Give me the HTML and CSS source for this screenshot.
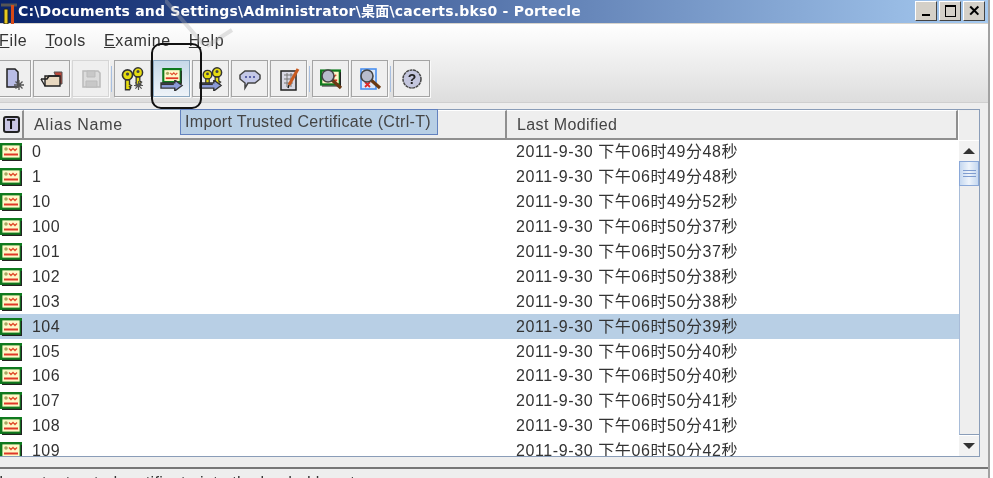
FILE: index.html
```html
<!DOCTYPE html>
<html lang="en">
<head>
    <meta charset="UTF-8">
    <meta name="viewport" content="width=device-width, initial-scale=1.0">
    <title>Portecle</title>
    <link rel="stylesheet" href="styles.css">
</head>
<body>
    <svg class="icon-defs" width="0" height="0">
        <defs>
            <symbol id="i-star" viewBox="0 0 10 10">
                <path d="M5 0v10M0 5h10M1.500 1.500l7 7M8.500 1.500l-7 7" stroke="#555" stroke-width="1.300" fill="none"/>
            </symbol>
            <symbol id="i-key" viewBox="0 0 14 24">
                <circle cx="7" cy="6.500" r="5.500" fill="#e6dc10" stroke="#333" stroke-width="1.800"/>
                <circle cx="7" cy="5.500" r="1.800" fill="#444"/>
                <path d="M4.800 12h4.400v5l2 1-2 1.500 1.300 1-1.300 2.200H4.800z" fill="#e6dc10" stroke="#333" stroke-width="1.500"/>
            </symbol>
            <symbol id="i-arrow" viewBox="0 0 24 12">
                <path d="M0 3.200h15V0l8 6-8 6V8.800H0z" fill="#8c9cd8" stroke="#333" stroke-width="1.500"/>
                <path d="M0 4.500h14" stroke="#333" stroke-width="2"/>
            </symbol>
            <symbol id="i-cert" viewBox="0 0 22 18">
                <rect x="1.200" y="1.200" width="19.600" height="14.600" fill="#fff9c8" stroke="#0f7a1e" stroke-width="2.400"/>
                <path d="M2 17.400h20M21.400 3v14" stroke="#222" stroke-width="1.200"/>
                <circle cx="6" cy="6" r="1.800" fill="#a8a860"/>
                <path d="M9 5.500l2 2 2-2 2 2 2-2" stroke="#e05030" stroke-width="1.400" fill="none"/>
                <path d="M4 11.500h14" stroke="#e03828" stroke-width="2"/>
            </symbol>
            <symbol id="i-lens" viewBox="0 0 24 24">
                <path d="M13 13l9 8" stroke="#6b3a14" stroke-width="3.200"/>
                <circle cx="9" cy="9" r="6" fill="#b8bccc" stroke="#444" stroke-width="1.600"/>
            </symbol>
        </defs>
    </svg>

    <div class="window">
        <div class="titlebar">
            <svg class="app-icon" viewBox="0 0 18 24" width="18" height="24">
                <path d="M1 5h16" stroke="#555" stroke-width="3"/>
                <path d="M11 5h3v19h-3z" fill="#d84a18"/>
                <path d="M4 9h4v15H4z" fill="#e6c820" stroke="#222"/>
            </svg>
            <span class="title-text">C:\Documents and Settings\Administrator\桌面\cacerts.bks0 - Portecle</span>
            <div class="window-buttons">
                <div class="win-btn"><span class="glyph-min"></span></div>
                <div class="win-btn"><span class="glyph-max"></span></div>
                <div class="win-btn win-close">✕</div>
            </div>
        </div>

        <div class="chrome">
            <div class="menubar">
                <span class="menu menu-file"><u>F</u>ile</span>
                <span class="menu"><u>T</u>ools</span>
                <span class="menu"><u>E</u>xamine</span>
                <span class="menu"><u>H</u>elp</span>
            </div>
            <div class="toolbar">
                <div class="tool">
                    <svg viewBox="0 0 24 24" width="24" height="24">
                        <path d="M6 2h8l3 3v15H6z" fill="#b9bde6" stroke="#222" stroke-width="1.500"/>
                        <use href="#i-star" x="13" y="13" width="10" height="10"/>
                    </svg>
                </div>
                <div class="tool">
                    <svg viewBox="0 0 24 24" width="24" height="24">
                        <path d="M14 5h8v12h-3z" fill="#b8463a" stroke="#555"/>
                        <path d="M5 9h15v10H5z" fill="#e8d8c0" stroke="#222" stroke-width="1.400"/>
                        <path d="M1 12h6l2-3h10" fill="none" stroke="#222" stroke-width="1.600"/>
                        <path d="M1 12l4 7" stroke="#222" stroke-width="1.400"/>
                    </svg>
                </div>
                <div class="tool tool-off">
                    <svg viewBox="0 0 24 24" width="24" height="24">
                        <path d="M4 4h15l2 2v14H4z" fill="#dcdcdc" stroke="#bbb" stroke-width="1.500"/>
                        <path d="M8 4h8v6H8zM7 14h11v6H7z" fill="#c8c8c8" stroke="#bbb"/>
                    </svg>
                </div>
                <div class="tool-sep"></div>
                <div class="tool">
                    <svg viewBox="0 0 24 24" width="24" height="24">
                        <use href="#i-key" x="0" y="2" width="13" height="22"/>
                        <use href="#i-key" x="11" y="0" width="12" height="20"/>
                        <use href="#i-star" x="13" y="14" width="9" height="9"/>
                    </svg>
                </div>
                <div class="tool tool-hot">
                    <svg viewBox="0 0 24 24" width="24" height="24">
                        <use href="#i-cert" x="2" y="1" width="20" height="16"/>
                        <use href="#i-arrow" x="0" y="13" width="24" height="11"/>
                    </svg>
                </div>
                <div class="tool">
                    <svg viewBox="0 0 24 24" width="24" height="24">
                        <use href="#i-key" x="3" y="2" width="11" height="20"/>
                        <use href="#i-key" x="12" y="0" width="12" height="20"/>
                        <use href="#i-arrow" x="0" y="13" width="24" height="11"/>
                    </svg>
                </div>
                <div class="tool">
                    <svg viewBox="0 0 24 24" width="24" height="24">
                        <path d="M7 4h10l5 4v4l-5 4H10l-3 5v-5l-5-4V8z" fill="#c4c8e8" stroke="#444" stroke-width="1.500"/>
                        <path d="M7 10h2M11 10h2M15 10h2" stroke="#5a62a8" stroke-width="2"/>
                    </svg>
                </div>
                <div class="tool">
                    <svg viewBox="0 0 24 24" width="24" height="24">
                        <path d="M4 4h15v19H4z" fill="#d8d8e4" stroke="#222" stroke-width="1.500"/>
                        <path d="M7 8h9M7 12h9M7 16h9M10 6v14M14 6v14" stroke="#777"/>
                        <path d="M21 2L12 18" stroke="#c85a20" stroke-width="3"/>
                        <path d="M12 18l-1 3" stroke="#222" stroke-width="1.500"/>
                    </svg>
                </div>
                <div class="tool-sep"></div>
                <div class="tool">
                    <svg viewBox="0 0 24 24" width="24" height="24">
                        <use href="#i-cert" x="1" y="2" width="21" height="18"/>
                        <use href="#i-lens" x="0" y="0" width="24" height="24"/>
                    </svg>
                </div>
                <div class="tool">
                    <svg viewBox="0 0 24 24" width="24" height="24">
                        <rect x="3" y="2" width="15" height="20" fill="#dce8fa" stroke="#4a90f0" stroke-width="1.600"/>
                        <path d="M7 15l5 5M12 15l-5 5" stroke="#e02828" stroke-width="1.800"/>
                        <use href="#i-lens" x="0" y="0" width="24" height="24"/>
                    </svg>
                </div>
                <div class="tool-sep"></div>
                <div class="tool">
                    <svg viewBox="0 0 24 24" width="24" height="24">
                        <circle cx="12" cy="12" r="9" fill="#c4c6de" stroke="#444" stroke-width="1.500" stroke-dasharray="3 .6"/>
                        <text class="help-mark" x="12" y="17" text-anchor="middle">?</text>
                    </svg>
                </div>
            </div>
        </div>

        <div class="table-frame">
            <div class="table-main">
                <div class="table-head">
                    <div class="head-cell head-type"><span class="type-badge">T</span></div>
                    <div class="head-cell head-alias">Alias Name</div>
                    <div class="head-cell head-date">Last Modified</div>
                </div>
                <div class="table-body">
                    <div class="row"><svg class="cert" width="22" height="18"><use href="#i-cert"/></svg><span>0</span><span class="date">2011-9-30 下午06时49分48秒</span></div>
                    <div class="row"><svg class="cert" width="22" height="18"><use href="#i-cert"/></svg><span>1</span><span class="date">2011-9-30 下午06时49分48秒</span></div>
                    <div class="row"><svg class="cert" width="22" height="18"><use href="#i-cert"/></svg><span>10</span><span class="date">2011-9-30 下午06时49分52秒</span></div>
                    <div class="row"><svg class="cert" width="22" height="18"><use href="#i-cert"/></svg><span>100</span><span class="date">2011-9-30 下午06时50分37秒</span></div>
                    <div class="row"><svg class="cert" width="22" height="18"><use href="#i-cert"/></svg><span>101</span><span class="date">2011-9-30 下午06时50分37秒</span></div>
                    <div class="row"><svg class="cert" width="22" height="18"><use href="#i-cert"/></svg><span>102</span><span class="date">2011-9-30 下午06时50分38秒</span></div>
                    <div class="row"><svg class="cert" width="22" height="18"><use href="#i-cert"/></svg><span>103</span><span class="date">2011-9-30 下午06时50分38秒</span></div>
                    <div class="row row-selected"><svg class="cert" width="22" height="18"><use href="#i-cert"/></svg><span>104</span><span class="date">2011-9-30 下午06时50分39秒</span></div>
                    <div class="row"><svg class="cert" width="22" height="18"><use href="#i-cert"/></svg><span>105</span><span class="date">2011-9-30 下午06时50分40秒</span></div>
                    <div class="row"><svg class="cert" width="22" height="18"><use href="#i-cert"/></svg><span>106</span><span class="date">2011-9-30 下午06时50分40秒</span></div>
                    <div class="row"><svg class="cert" width="22" height="18"><use href="#i-cert"/></svg><span>107</span><span class="date">2011-9-30 下午06时50分41秒</span></div>
                    <div class="row"><svg class="cert" width="22" height="18"><use href="#i-cert"/></svg><span>108</span><span class="date">2011-9-30 下午06时50分41秒</span></div>
                    <div class="row"><svg class="cert" width="22" height="18"><use href="#i-cert"/></svg><span>109</span><span class="date">2011-9-30 下午06时50分42秒</span></div>
                </div>
            </div>
            <div class="scrollbar">
                <div class="scroll-corner"></div>
                <div class="scroll-btn"><span class="arrow-up"></span></div>
                <div class="scroll-thumb"><span></span><span></span><span></span></div>
                <div class="scroll-track"></div>
                <div class="scroll-btn"><span class="arrow-down"></span></div>
            </div>
        </div>

        <div class="gap-band"></div>
        <div class="statusbar">Import a trusted certificate into the loaded keystore</div>
    </div>

    <!-- stuff drawn over the screenshot -->
    <svg class="watermark" viewBox="0 0 70 50" width="70" height="50">
        <path d="M0 0l38 44M67 30L42 46" stroke="#b0b0b0" stroke-width="4" fill="none" opacity=".35"/>
    </svg>
    <div class="callout"></div>
    <div class="tooltip">Import Trusted Certificate (Ctrl-T)</div>
</body>
</html>
```

FILE: styles.css
```css
html, body {
    margin: 0;
    padding: 0;
    height: 100%;
    overflow: hidden;
    background: white;
}
body {
    position: relative;
    font-family: "Liberation Sans", "Noto Sans CJK SC", sans-serif;
    font-size: 16px;
    color: #333;
}
.icon-defs {
    position: absolute;
}
.window {
    width: 988px;
    height: 478px;
    border-right: 2px solid #a2a2a2;
    display: flex;
    flex-direction: column;
    overflow: hidden;
    background: #eeeeee;
    filter: blur(0.35px);
}

.titlebar {
    height: 23px;
    flex: none;
    display: flex;
    align-items: center;
    background: linear-gradient(to right, #0a246a, #a6caf0);
    border-bottom: 1px solid #d8d4cc;
}
.app-icon {
    flex: none;
}
.title-text {
    color: white;
    font-family: "DejaVu Sans", "Noto Sans CJK SC", sans-serif;
    font-weight: bold;
    font-size: 14px;
    letter-spacing: 0.21px;
    padding-bottom: 3px;
    white-space: nowrap;
}
.window-buttons {
    margin-left: auto;
    margin-right: 3px;
    margin-bottom: 2px;
    display: flex;
    gap: 2px;
}
.win-btn {
    width: 20px;
    height: 18px;
    background: #d4d0c8;
    border: 1px solid;
    border-color: #fff #444 #444 #fff;
    display: flex;
    align-items: center;
    justify-content: center;
    color: #000;
    font-size: 15px;
    font-weight: bold;
}
.glyph-min {
    width: 8px;
    height: 2px;
    background: #000;
    margin-top: 9px;
}
.glyph-max {
    width: 9px;
    height: 9px;
    border: 1px solid #000;
    border-top-width: 2px;
}

.chrome {
    height: 78px;
    flex: none;
    background: linear-gradient(to bottom, #ffffff, #dddddd);
    border-bottom: 1px solid #cfcfcf;
}
.menubar {
    height: 36px;
    display: flex;
    align-items: center;
    gap: 18px;
    letter-spacing: 0.65px;
    padding-bottom: 2px;
    box-sizing: border-box;
}
.menu-file {
    margin-left: -1px;
}
.toolbar {
    display: flex;
    align-items: center;
    gap: 2px;
    margin-left: -6px;
}
.tool {
    width: 35px;
    height: 35px;
    border: 1px solid #a4a4a4;
    box-shadow: 1px 1px 0 #fafafa;
    background: #efefef;
    display: flex;
    align-items: center;
    justify-content: center;
}
.tool-off {
    border-color: #d6d6d6;
}
.tool-hot {
    background: linear-gradient(to bottom, #c6d9e9, #eef3f8);
    border-color: #8ba7bf;
}
.tool-sep {
    width: 1px;
    height: 26px;
    background: #a8bfe0;
}
.help-mark {
    font-family: "Liberation Sans", sans-serif;
    font-weight: bold;
    font-size: 14px;
    fill: #222;
}

.table-frame {
    margin-top: 6px;
    width: 980px;
    height: 348px;
    flex: none;
    display: flex;
    background: white;
    border-top: 1px solid #8a9db8;
    border-bottom: 1px solid #8a9db8;
    box-sizing: border-box;
}
.table-main {
    width: 960px;
    display: flex;
    flex-direction: column;
}
.table-head {
    height: 30px;
    flex: none;
    display: flex;
    width: 958px;
    background: #eeeeee;
    border-bottom: 2px solid #8f8f8f;
    box-sizing: border-box;
}
.head-cell {
    display: flex;
    align-items: center;
    border-top: 1px solid #fff;
    border-right: 2px solid #8f8f8f;
    box-sizing: border-box;
    letter-spacing: 0.5px;
    color: #444;
}
.head-type {
    width: 24px;
    justify-content: center;
}
.type-badge {
    width: 17px;
    height: 17px;
    box-sizing: border-box;
    border: 2px solid #222;
    border-radius: 3px;
    background: #c9c6e4;
    color: #111;
    font-size: 14px;
    font-weight: bold;
    line-height: 13px;
    text-align: center;
    letter-spacing: 0;
}
.head-alias {
    width: 483px;
    padding-left: 10px;
    letter-spacing: 0.7px;
}
.head-date {
    flex: 1;
    padding-left: 10px;
    letter-spacing: 0.4px;
}
.table-body {
    flex: 1;
    overflow: hidden;
}
.row {
    height: 24.9px;
    display: grid;
    grid-template-columns: 32px 484px 1fr;
    grid-template-rows: 24.9px;
    align-items: center;
    letter-spacing: 0.45px;
    white-space: nowrap;
}
.date {
    letter-spacing: 0.6px;
    padding-bottom: 4px;
}
.row-selected {
    background: #b8cfe5;
}
.cert {
    display: block;
}

.scrollbar {
    width: 20px;
    display: flex;
    flex-direction: column;
    border-right: 1px solid #8a9db8;
    background: #eeeeee;
}
.scroll-corner {
    height: 30px;
    flex: none;
}
.scroll-btn {
    height: 21px;
    flex: none;
    display: flex;
    align-items: center;
    justify-content: center;
    background: #f2f2f2;
    border-top: 1px solid #fff;
    box-sizing: border-box;
}
.arrow-up {
    border: 6px solid transparent;
    border-top: 0;
    border-bottom: 6px solid #333;
}
.arrow-down {
    border: 6px solid transparent;
    border-bottom: 0;
    border-top: 6px solid #333;
}
.scroll-thumb {
    height: 25px;
    flex: none;
    box-sizing: border-box;
    border: 1px solid #8aa8d8;
    background: linear-gradient(to right, #c5d8f0, #eef4fb, #c5d8f0);
    display: flex;
    flex-direction: column;
    justify-content: center;
    align-items: center;
    gap: 2px;
}
.scroll-thumb span {
    width: 13px;
    height: 1px;
    background: #7f9dd0;
}
.scroll-track {
    flex: 1;
    border-left: 1px solid #a8bcd8;
    border-bottom: 1px solid #8a9db8;
}

.gap-band {
    height: 12px;
    flex: none;
    box-sizing: border-box;
    border-bottom: 2px solid #777;
}
.statusbar {
    margin-top: 5px;
    margin-left: -1px;
    letter-spacing: 0.4px;
    white-space: nowrap;
    line-height: 18px;
}

.watermark {
    position: absolute;
    left: 165px;
    top: 0;
}
.callout {
    position: absolute;
    left: 151px;
    top: 43px;
    width: 47px;
    height: 62px;
    border: 2px solid #111;
    border-radius: 10px;
}
.tooltip {
    position: absolute;
    left: 180px;
    top: 109px;
    width: 252px;
    height: 24px;
    line-height: 23px;
    background: #b8cfe5;
    border: 1px solid #6382bf;
    padding-left: 4px;
    letter-spacing: 0.32px;
    color: #444;
    white-space: nowrap;
    filter: blur(0.35px);
}
```
